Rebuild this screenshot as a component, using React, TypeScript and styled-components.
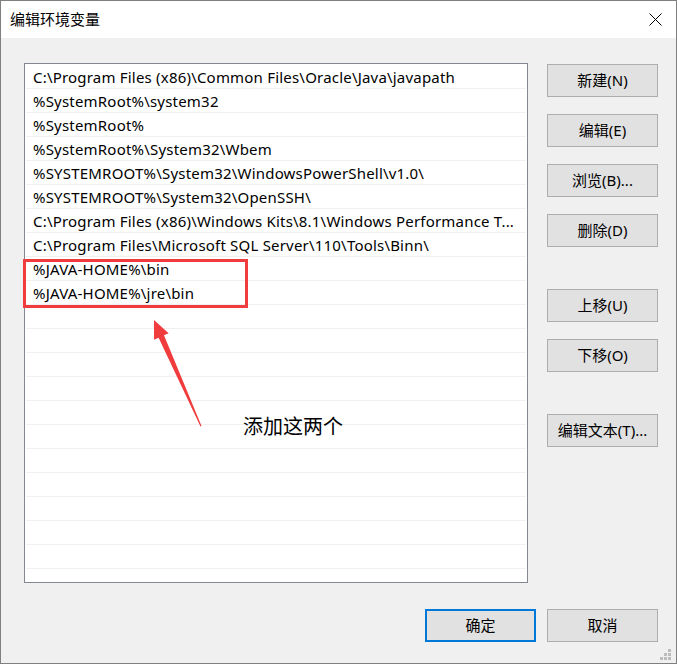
import React from "react";
import styled, { createGlobalStyle } from "styled-components";

const GlobalStyle = createGlobalStyle`
  html, body {
    margin: 0;
    padding: 0;
    background: #ffffff;
  }
  * { box-sizing: border-box; }
`;

const FONT = `"Noto Sans", "Noto Sans CJK SC", sans-serif`;

const Window = styled.div`
  position: relative;
  width: 677px;
  height: 664px;
  border: 1px solid #7f7f7f;
  background: #f0f0f0;
  display: flex;
  flex-direction: column;
  font-family: ${FONT};
  color: #000;
  overflow: hidden;
`;

const TitleBar = styled.div`
  height: 37px;
  flex: none;
  background: #ffffff;
  display: flex;
  align-items: center;
  justify-content: space-between;
  padding: 0 14px 0 9px;
`;

const Title = styled.div`
  font-size: 15px;
  line-height: 20px;
  margin-top: -1px;
`;

const CloseButton = styled.div`
  width: 14px;
  height: 14px;
  display: flex;
  align-items: center;
  justify-content: center;
`;

const Body = styled.div`
  flex: 1;
  display: flex;
  flex-direction: column;
  padding: 25px 18px 0 23px;
`;

const Main = styled.div`
  display: flex;
  gap: 19px;
`;

const ListBox = styled.div`
  width: 504px;
  height: 520px;
  flex: none;
  background: #ffffff;
  border: 1px solid #828790;
  padding: 1px 1px 0 1px;
  overflow: hidden;
`;

const Row = styled.div`
  height: 24px;
  border-bottom: 1px solid #f0f0f0;
  padding: 1px 0 0 7px;
  font-size: 15px;
  line-height: 22px;
  letter-spacing: 0.2px;
  white-space: nowrap;
  overflow: hidden;
`;

const SideColumn = styled.div`
  display: flex;
  flex-direction: column;
  padding-top: 1px;
`;

const Button = styled.div<{ $space?: number; $focused?: boolean }>`
  width: 111px;
  height: 33px;
  margin-top: ${(p) => p.$space ?? 0}px;
  background: #e1e1e1;
  border: ${(p) => (p.$focused ? "2px solid #0078d7" : "1px solid #adadad")};
  display: flex;
  align-items: center;
  justify-content: center;
  font-size: 15px;
  line-height: 20px;
  padding-bottom: 1px;
  white-space: nowrap;
`;

const Footer = styled.div`
  display: flex;
  justify-content: flex-end;
  gap: 11px;
  margin-top: 26px;
`;

const Grip = styled.svg`
  position: absolute;
  right: 5px;
  bottom: 3px;
`;

const Highlight = styled.div`
  position: absolute;
  left: 22px;
  top: 258px;
  width: 225px;
  height: 49px;
  border: 3px solid #f03c3c;
`;

const Arrow = styled.svg`
  position: absolute;
  left: 0;
  top: 0;
  pointer-events: none;
`;

const Note = styled.div`
  position: absolute;
  left: 242px;
  top: 412px;
  font-size: 20px;
  line-height: 26px;
  font-family: "Noto Sans CJK SC", sans-serif;
`;

const paths = [
  "C:\\Program Files (x86)\\Common Files\\Oracle\\Java\\javapath",
  "%SystemRoot%\\system32",
  "%SystemRoot%",
  "%SystemRoot%\\System32\\Wbem",
  "%SYSTEMROOT%\\System32\\WindowsPowerShell\\v1.0\\",
  "%SYSTEMROOT%\\System32\\OpenSSH\\",
  "C:\\Program Files (x86)\\Windows Kits\\8.1\\Windows Performance T...",
  "C:\\Program Files\\Microsoft SQL Server\\110\\Tools\\Binn\\",
  "%JAVA-HOME%\\bin",
  "%JAVA-HOME%\\jre\\bin",
];

const rows = [...paths, ...Array(12).fill("")];

const sideButtons: { label: string; space: number }[] = [
  { label: "新建(N)", space: 0 },
  { label: "编辑(E)", space: 17 },
  { label: "浏览(B)...", space: 17 },
  { label: "删除(D)", space: 17 },
  { label: "上移(U)", space: 42 },
  { label: "下移(O)", space: 17 },
  { label: "编辑文本(T)...", space: 42 },
];

export default function App() {
  return (
    <>
      <GlobalStyle />
      <Window>
        <TitleBar>
          <Title>编辑环境变量</Title>
          <CloseButton>
            <svg width="13" height="13" viewBox="0 0 13 13">
              <path d="M0.5 0.5 L12.5 12.5 M12.5 0.5 L0.5 12.5" stroke="#000" strokeWidth="1" />
            </svg>
          </CloseButton>
        </TitleBar>
        <Body>
          <Main>
            <ListBox>
              {rows.map((r, i) => (
                <Row key={i}>{r}</Row>
              ))}
            </ListBox>
            <SideColumn>
              {sideButtons.map((b) => (
                <Button key={b.label} $space={b.space}>
                  {b.label}
                </Button>
              ))}
            </SideColumn>
          </Main>
          <Footer>
            <Button $focused>确定</Button>
            <Button>取消</Button>
          </Footer>
        </Body>
        <Grip width="11" height="11" viewBox="0 0 11 11">
          <g fill="#bcbcbc">
            <rect x="8" y="0" width="3" height="3" />
            <rect x="4" y="4" width="3" height="3" />
            <rect x="8" y="4" width="3" height="3" />
            <rect x="0" y="8" width="3" height="3" />
            <rect x="4" y="8" width="3" height="3" />
            <rect x="8" y="8" width="3" height="3" />
          </g>
        </Grip>
        <Highlight />
        <Arrow width="677" height="664" viewBox="1 1 677 664">
          <polygon
            points="154,320 168.6,333.3 164,335.3 201.5,426 200.5,426.5 158.6,337.7 154,339.7"
            fill="#f03c3c"
          />
        </Arrow>
        <Note>添加这两个</Note>
      </Window>
    </>
  );
}
